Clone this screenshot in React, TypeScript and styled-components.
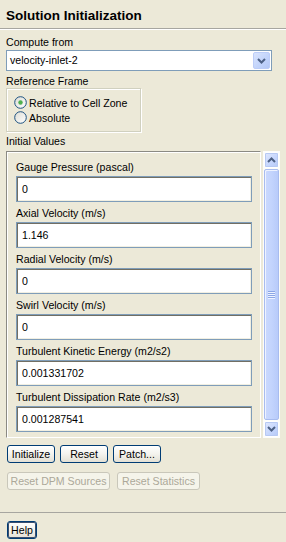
import React from "react";
import styled, { createGlobalStyle } from "styled-components";

const Global = createGlobalStyle`
  html, body { margin: 0; padding: 0; background: #ece9d8; }
  body { font-family: "Liberation Sans", Arial, sans-serif; font-size: 10.6px; color: #000; }
  * { box-sizing: border-box; }
`;

const Panel = styled.div`
  width: 286px;
  height: 542px;
  background: #ece9d8;
  display: flex;
  flex-direction: column;
  overflow: hidden;
`;

const TitleBar = styled.div`
  height: 29px;
  padding: 8px 0 0 6px;
  font-size: 13.5px;
  line-height: 16px;
  font-weight: bold;
  border-bottom: 1px solid #a7a6a0;
  box-shadow: 0 1px 0 #ffffff;
`;

const Content = styled.div`
  flex: 1;
  padding: 7px 6px 0 6px;
  display: flex;
  flex-direction: column;
`;

const FieldLabel = styled.div<{ $mb?: number; $mt?: number }>`
  line-height: 13px;
  height: 13px;
  margin-top: ${(p) => p.$mt ?? 0}px;
  margin-bottom: ${(p) => p.$mb ?? 1}px;
  white-space: nowrap;
`;

const Select = styled.div`
  width: 266px;
  height: 21px;
  border: 1px solid #7f9db9;
  background: #fff;
  display: flex;
  align-items: center;
  padding: 1px;
`;

const SelectText = styled.div`
  flex: 1;
  padding-left: 2px;
  line-height: 17px;
`;

const DropButton = styled.div`
  width: 17px;
  height: 17px;
  border: 1px solid #bccdf8;
  border-radius: 2px;
  background: linear-gradient(135deg, #d9e4fd 0%, #c1d3fb 60%, #b4c8f6 100%);
  display: flex;
  align-items: center;
  justify-content: center;
`;

const GroupBox = styled.div`
  width: 135px;
  height: 44px;
  border: 1px solid #d0d0bf;
  box-shadow: inset 1px 1px 0 #fff, 1px 1px 0 #fff;
  padding: 6px 0 0 7px;
  display: flex;
  flex-direction: column;
`;

const RadioRow = styled.label`
  display: flex;
  align-items: center;
  height: 15px;
  gap: 2px;
  white-space: nowrap;
`;

const ScrollArea = styled.div`
  display: flex;
  gap: 2px;
  height: 287px;
`;

const ValuesPane = styled.div`
  width: 255px;
  height: 287px;
  border-top: 1px solid #8b8a83;
  border-left: 1px solid #8b8a83;
  border-right: 1px solid #fff;
  border-bottom: 1px solid #fff;
  box-shadow: inset 1px 1px 0 #fff;
  padding: 9px 0 0 9px;
  display: flex;
  flex-direction: column;
  gap: 5px;
`;

const Field = styled.div`
  display: flex;
  flex-direction: column;
  gap: 2px;
`;

const Input = styled.div`
  width: 236px;
  height: 26px;
  border: 1px solid #7f9db9;
  background: #fff;
  box-shadow: inset 1px 1px 0 #716f64, inset -1px -1px 0 #f1efe2;
  padding: 0 5px;
  line-height: 24px;
`;

const ScrollBar = styled.div`
  width: 17px;
  display: flex;
  flex-direction: column;
  background: #fdfdfa;
  padding: 1px 0;
  gap: 1px;
`;

const ScrollButton = styled.div`
  height: 16px;
  border: 1px solid #fff;
  outline: 1px solid #b7c9f3;
  outline-offset: -2px;
  border-radius: 2px;
  background: linear-gradient(135deg, #e0e8fd 0%, #c4d5fd 60%, #b6c9f6 100%);
  display: flex;
  align-items: center;
  justify-content: center;
  margin: 0 1px;
`;

const Thumb = styled.div`
  flex: 1;
  margin: 0 1px;
  border: 1px solid #a8bcef;
  border-radius: 2px;
  background: linear-gradient(90deg, #cad9fe 0%, #c3d4fd 50%, #b8cbfa 100%);
  box-shadow: inset 1px 1px 0 #eef3ff;
  display: flex;
  align-items: center;
  justify-content: center;
`;

const Grip = styled.div`
  display: flex;
  flex-direction: column;
  gap: 1px;
  & > span {
    display: block;
    width: 7px;
    height: 1px;
    background: #8ca6e6;
    box-shadow: 0 1px 0 #eef3ff;
  }
`;

const ButtonRow = styled.div<{ $mt: number; $gap: number }>`
  display: flex;
  gap: ${(p) => p.$gap}px;
  margin-top: ${(p) => p.$mt}px;
  padding-left: 1px;
`;

const Button = styled.div<{ $w: number; $disabled?: boolean; $default?: boolean }>`
  width: ${(p) => p.$w}px;
  height: 18px;
  border: 1px solid ${(p) => (p.$disabled ? "#c9c7ba" : "#003c74")};
  border-radius: 3px;
  background: ${(p) =>
    p.$disabled ? "#f5f4ea" : "linear-gradient(180deg, #ffffff 0%, #f4f3ee 50%, #e3e0d4 100%)"};
  color: ${(p) => (p.$disabled ? "#aca899" : "#000")};
  box-shadow: ${(p) => (p.$default ? "inset 0 0 0 1px #3c4f6e" : "none")};
  display: flex;
  align-items: center;
  justify-content: center;
  line-height: 16px;
  white-space: nowrap;
`;

const Footer = styled.div`
  height: 30px;
  border-top: 1px solid #a7a6a0;
  padding: 8px 0 0 7px;
`;

const Radio = ({ checked }: { checked?: boolean }) => (
  <svg width="13" height="13" viewBox="0 0 13 13">
    <defs>
      <linearGradient id={checked ? "rg1" : "rg2"} x1="0" y1="0" x2="1" y2="1">
        <stop offset="0" stopColor="#dcdcd4" />
        <stop offset="1" stopColor="#ffffff" />
      </linearGradient>
    </defs>
    <circle cx="6.5" cy="6.5" r="5.8" fill={`url(#${checked ? "rg1" : "rg2"})`} stroke="#1c5180" strokeWidth="1" />
    {checked && <circle cx="6.5" cy="6.5" r="2.2" fill="#4fb04f" />}
  </svg>
);

const Chevron = ({ up }: { up?: boolean }) => (
  <svg width="9" height="6" viewBox="0 0 9 6">
    <path
      d={up ? "M1 5 L4.5 1.5 L8 5" : "M1 1 L4.5 4.5 L8 1"}
      fill="none"
      stroke="#4d6185"
      strokeWidth="2"
    />
  </svg>
);

const fields: [string, string][] = [
  ["Gauge Pressure (pascal)", "0"],
  ["Axial Velocity (m/s)", "1.146"],
  ["Radial Velocity (m/s)", "0"],
  ["Swirl Velocity (m/s)", "0"],
  ["Turbulent Kinetic Energy (m2/s2)", "0.001331702"],
  ["Turbulent Dissipation Rate (m2/s3)", "0.001287541"],
];

export default function App() {
  return (
    <>
      <Global />
      <Panel>
        <TitleBar>Solution Initialization</TitleBar>
        <Content>
          <FieldLabel>Compute from</FieldLabel>
          <Select>
            <SelectText>velocity-inlet-2</SelectText>
            <DropButton>
              <Chevron />
            </DropButton>
          </Select>
          <FieldLabel $mt={4} $mb={0}>Reference Frame</FieldLabel>
          <GroupBox>
            <RadioRow>
              <Radio checked />
              Relative to Cell Zone
            </RadioRow>
            <RadioRow>
              <Radio />
              Absolute
            </RadioRow>
          </GroupBox>
          <FieldLabel $mt={3} $mb={3}>Initial Values</FieldLabel>
          <ScrollArea>
            <ValuesPane>
              {fields.map(([label, value]) => (
                <Field key={label}>
                  <FieldLabel $mb={0}>{label}</FieldLabel>
                  <Input>{value}</Input>
                </Field>
              ))}
            </ValuesPane>
            <ScrollBar>
              <ScrollButton>
                <Chevron up />
              </ScrollButton>
              <Thumb>
                <Grip>
                  <span />
                  <span />
                  <span />
                  <span />
                </Grip>
              </Thumb>
              <ScrollButton>
                <Chevron />
              </ScrollButton>
            </ScrollBar>
          </ScrollArea>
          <ButtonRow $mt={7} $gap={5}>
            <Button $w={48}>Initialize</Button>
            <Button $w={48}>Reset</Button>
            <Button $w={48}>Patch...</Button>
          </ButtonRow>
          <ButtonRow $mt={9} $gap={7}>
            <Button $w={103} $disabled>Reset DPM Sources</Button>
            <Button $w={83} $disabled>Reset Statistics</Button>
          </ButtonRow>
        </Content>
        <Footer>
          <Button $w={30} $default>Help</Button>
        </Footer>
      </Panel>
    </>
  );
}
